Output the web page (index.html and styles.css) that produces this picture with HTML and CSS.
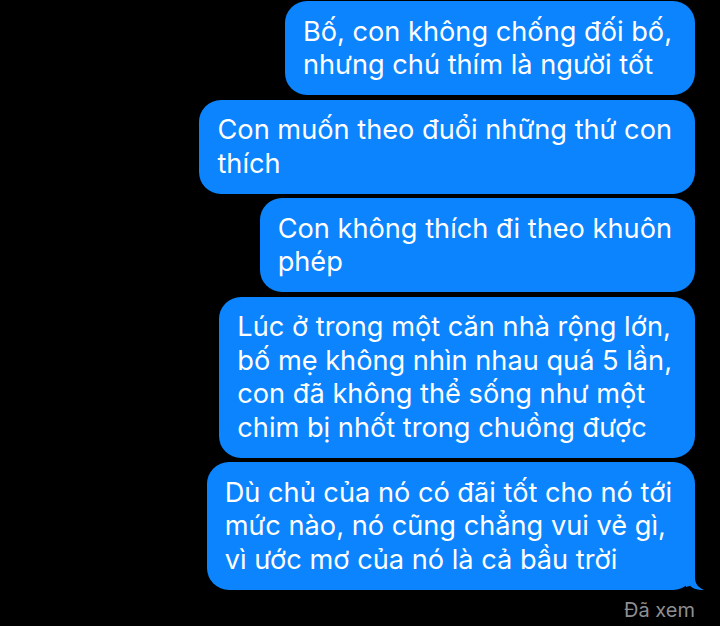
FILE: index.html
```html
<!doctype html>
<html>
<head>
<meta charset="utf-8">
<title>Tin nhắn</title>
<link rel="stylesheet" href="styles.css">
</head>
<body>
<div class="thread">
	<div class="bubble">Bố, con không chống đối bố,<br>nhưng chú thím là người tốt</div>
	<div class="bubble">Con muốn theo đuổi những thứ con<br>thích</div>
	<div class="bubble">Con không thích đi theo khuôn<br>phép</div>
	<div class="bubble">Lúc ở trong một căn nhà rộng lớn,<br>bố mẹ không nhìn nhau quá 5 lần,<br>con đã không thể sống như một<br>chim bị nhốt trong chuồng được</div>
	<div class="bubble last">Dù chủ của nó có đãi tốt cho nó tới<br>mức nào, nó cũng chẳng vui vẻ gì,<br>vì ước mơ của nó là cả bầu trời
		<svg class="tail" width="20" height="24" viewBox="0 0 20 24">
			<path d="M2 0 H11 V12 C11 17.5 14 21.5 20 24 C14 24.3 9 22.8 6 19.8 C4.5 20.5 3 21 2 21 Z" fill="#0b84fe"/>
		</svg>
	</div>
	<div class="status">Đã xem</div>
</div>
</body>
</html>
```

FILE: styles.css
```css
body
{
	margin: 0;
	background: #000;
	font-family: Inter, "Noto Sans", sans-serif;
}
/*cột tin nhắn*/
.thread
{
	display: flex;
	flex-direction: column;
	align-items: flex-end;
	gap: 4.5px;
	padding: 1px 25px 0 0;
}
.bubble
{
	position: relative;
	background: #0b84fe;
	color: #fff;
	font-size: 27.2px;
	line-height: 33.5px;
	padding: 13.5px 23px 13.5px 18px;
	border-radius: 22px;
	white-space: nowrap;
}
/*đuôi của tin cuối*/
.tail
{
	position: absolute;
	right: -9px;
	bottom: 0;
}
.status
{
	color: #8e8e93;
	font-size: 20px;
	line-height: 24px;
	margin-top: 4px;
}
```
